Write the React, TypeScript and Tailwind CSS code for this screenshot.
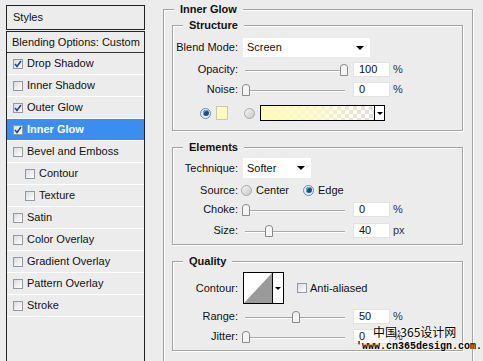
import React from 'react';

const FONT = { fontFamily: '"Liberation Sans", Arial, sans-serif' };

type Item = { label: string; checked?: boolean; indent?: boolean; active?: boolean };

const ITEMS: Item[] = [
  { label: 'Drop Shadow', checked: true },
  { label: 'Inner Shadow' },
  { label: 'Outer Glow', checked: true },
  { label: 'Inner Glow', checked: true, active: true },
  { label: 'Bevel and Emboss' },
  { label: 'Contour', indent: true },
  { label: 'Texture', indent: true },
  { label: 'Satin' },
  { label: 'Color Overlay' },
  { label: 'Gradient Overlay' },
  { label: 'Pattern Overlay' },
  { label: 'Stroke' },
];

function Check({ checked }: { checked?: boolean }) {
  return (
    <span className="w-[10px] h-[10px] border border-[#8f9aa6] bg-gradient-to-br from-[#dcdcdc] to-white flex items-center justify-center shrink-0">
      {checked && (
        <svg width="8" height="8" viewBox="0 0 8 8">
          <path d="M1 4 L3 6.5 L7 1" fill="none" stroke="#1f3f9a" strokeWidth="1.6" />
        </svg>
      )}
    </span>
  );
}

function Radio({ on }: { on?: boolean }) {
  return (
    <span
      className={
        'w-[11px] h-[11px] rounded-full border flex items-center justify-center shrink-0 ' +
        (on ? 'border-[#6a8bb0] bg-[#e8eef6]' : 'border-[#a8a8a8] bg-gradient-to-br from-[#f6f6f6] to-[#c8c8c8]')
      }
    >
      {on && <span className="w-[6px] h-[6px] rounded-full bg-[#1d4f86] shadow-[inset_1px_1px_0_#6fa8dc]" />}
    </span>
  );
}

function Thumb() {
  return (
    <svg width="8" height="12" viewBox="0 0 8 12">
      <path d="M0.5 11.5 V3 Q0.5 0.5 4 0.5 Q7.5 0.5 7.5 3 V11.5 Z" fill="#f4f4f4" stroke="#8a8a8a" />
    </svg>
  );
}

function Slider({ pos }: { pos: string }) {
  return (
    <div className="relative w-[104px] h-[14px]">
      <div className="absolute left-[3px] right-[1px] top-[7px] h-px bg-[#a9a9a9] shadow-[0_1px_0_#fff]" />
      <div className={'absolute top-[1px] ' + pos}>
        <Thumb />
      </div>
    </div>
  );
}

function NumBox({ value, unit }: { value: string; unit: string }) {
  return (
    <div className="flex items-center ml-[7px]">
      <div className="w-[37px] h-[15px] bg-white border border-[#e2e2e2] pl-[5px] leading-[13px]">{value}</div>
      <span className="ml-[3px] text-[#333]">{unit}</span>
    </div>
  );
}

function Label({ children }: { children: React.ReactNode }) {
  return <div className="w-[66px] text-right pr-[1px] shrink-0">{children}</div>;
}

function Box({ title, className, children }: { title: string; className?: string; children: React.ReactNode }) {
  return (
    <div className={'relative shrink-0 border border-[#a3a3a3] shadow-[1px_1px_0_#fff,inset_1px_1px_0_#fff] ' + (className || '')}>
      <div className="absolute -top-[8px] left-[10px] px-[6px] bg-[#ececec] font-bold leading-[14px]">{title}</div>
      {children}
    </div>
  );
}

export default function App() {
  return (
    <div className="w-[483px] h-[361px] overflow-hidden bg-[#ececec] text-[11px] text-[#111] flex relative" style={FONT}>
      {/* styles list */}
      <div className="ml-[6px] mt-[5px] w-[139px] flex flex-col shrink-0">
        <div className="h-[25px] shrink-0 border border-[#222] flex items-center pl-[6px]">Styles</div>
        <div className="mt-px shrink-0 border border-[#222] h-[400px]">
          <div className="h-[21px] border-b border-[#333] flex items-center pl-[5px]">Blending Options: Custom</div>
          {ITEMS.map((it) => (
            <div
              key={it.label}
              className={
                'h-[22px] border-b border-white flex items-center gap-[4px] ' +
                (it.indent ? 'pl-[18px] ' : 'pl-[6px] ') +
                (it.active ? 'bg-[#3b8ef0] text-white font-bold' : '')
              }
            >
              <Check checked={it.checked} />
              <span>{it.label}</span>
            </div>
          ))}
        </div>
      </div>

      {/* settings */}
      <Box title="Inner Glow" className="ml-[18px] mt-[9px] w-[310px] h-[400px] pl-[8px] pr-[9px] pt-[15px]">
        <Box title="Structure" className="h-[106px] pt-[12px]">
          <div className="flex items-center h-[19px]">
            <Label>Blend Mode:</Label>
            <div className="ml-[4px] w-[127px] h-[19px] bg-white flex items-center justify-between pl-[4px] pr-[6px]">
              <span>Screen</span>
              <span className="w-0 h-0 border-l-[4px] border-r-[4px] border-t-[4px] border-l-transparent border-r-transparent border-t-black" />
            </div>
          </div>
          <div className="flex items-center h-[15px] mt-[5px]">
            <Label>Opacity:</Label>
            <div className="ml-[3px]"><Slider pos="left-[98px]" /></div>
            <NumBox value="100" unit="%" />
          </div>
          <div className="flex items-center h-[15px] mt-[5px]">
            <Label>Noise:</Label>
            <div className="ml-[3px]"><Slider pos="left-0" /></div>
            <NumBox value="0" unit="%" />
          </div>
          <div className="flex items-center h-[16px] mt-[8px] pl-[27px]">
            <Radio on />
            <span className="ml-[5px] w-[12px] h-[14px] bg-[#fffbc0] border border-[#c9c9b0]" />
            <span className="ml-[16px]"><Radio /></span>
            <div className="ml-[5px] w-[125px] h-[16px] border border-black flex">
              <div className="flex-1 bg-[length:8px_8px] bg-[linear-gradient(45deg,#ddd_25%,transparent_25%,transparent_75%,#ddd_75%),linear-gradient(45deg,#ddd_25%,#fff_25%,#fff_75%,#ddd_75%)] bg-[position:0_0,4px_4px] relative">
                <div className="absolute inset-0 bg-gradient-to-r from-[#fffbb8] via-[#fffbc8]/80 to-transparent" />
              </div>
              <div className="w-[10px] border-l border-black bg-white flex items-center justify-center">
                <span className="w-0 h-0 border-l-[3px] border-r-[3px] border-t-[3px] border-l-transparent border-r-transparent border-t-black" />
              </div>
            </div>
          </div>
        </Box>

        <Box title="Elements" className="mt-[16px] h-[98px] pt-[10px]">
          <div className="flex items-center h-[20px]">
            <Label>Technique:</Label>
            <div className="ml-[4px] w-[68px] h-[20px] bg-white flex items-center justify-between pl-[4px] pr-[6px]">
              <span>Softer</span>
              <span className="w-0 h-0 border-l-[4px] border-r-[4px] border-t-[4px] border-l-transparent border-r-transparent border-t-black" />
            </div>
          </div>
          <div className="flex items-center h-[14px] mt-[5px]">
            <Label>Source:</Label>
            <div className="ml-[2px] flex items-center">
              <Radio />
              <span className="ml-[4px]">Center</span>
              <span className="ml-[14px]"><Radio on /></span>
              <span className="ml-[4px]">Edge</span>
            </div>
          </div>
          <div className="flex items-center h-[15px] mt-[5px]">
            <Label>Choke:</Label>
            <div className="ml-[3px]"><Slider pos="left-0" /></div>
            <NumBox value="0" unit="%" />
          </div>
          <div className="flex items-center h-[15px] mt-[6px]">
            <Label>Size:</Label>
            <div className="ml-[3px]"><Slider pos="left-[23px]" /></div>
            <NumBox value="40" unit="px" />
          </div>
        </Box>

        <Box title="Quality" className="mt-[16px] h-[90px] pt-[10px]">
          <div className="flex items-center h-[32px]">
            <Label>Contour:</Label>
            <div className="ml-[4px] w-[41px] h-[32px] border border-black bg-white flex">
              <svg width="28" height="30" viewBox="0 0 28 30" className="shrink-0">
                <polygon points="0,30 28,0 28,30" fill="#9a9a9a" />
              </svg>
              <div className="flex-1 border-l border-black flex items-center justify-center">
                <span className="w-0 h-0 border-l-[3px] border-r-[3px] border-t-[3px] border-l-transparent border-r-transparent border-t-black" />
              </div>
            </div>
            <span className="ml-[13px]"><Check /></span>
            <span className="ml-[3px]">Anti-aliased</span>
          </div>
          <div className="flex items-center h-[15px] mt-[5px]">
            <Label>Range:</Label>
            <div className="ml-[3px]"><Slider pos="left-[50px]" /></div>
            <NumBox value="50" unit="%" />
          </div>
          <div className="flex items-center h-[15px] mt-[5px]">
            <Label>Jitter:</Label>
            <div className="ml-[3px]"><Slider pos="left-0" /></div>
            <NumBox value="0" unit="%" />
          </div>
        </Box>
      </Box>

      {/* watermark */}
      <div className="absolute left-[356px] top-[326px] leading-none">
        <div
          className="ml-[17px] text-[12px] text-black [text-shadow:0_0_2px_#fff,0_0_2px_#fff]"
          style={{ fontFamily: '"Noto Sans CJK SC", "Liberation Sans", sans-serif' }}
        >
          中国:365设计网
        </div>
        <div
          className="mt-[4px] text-[10px] font-bold text-black [text-shadow:0_0_2px_#fff,0_0_2px_#fff]"
          style={{ fontFamily: '"Liberation Mono", monospace' }}
        >
          'www.cn365design.com.
        </div>
      </div>
    </div>
  );
}
